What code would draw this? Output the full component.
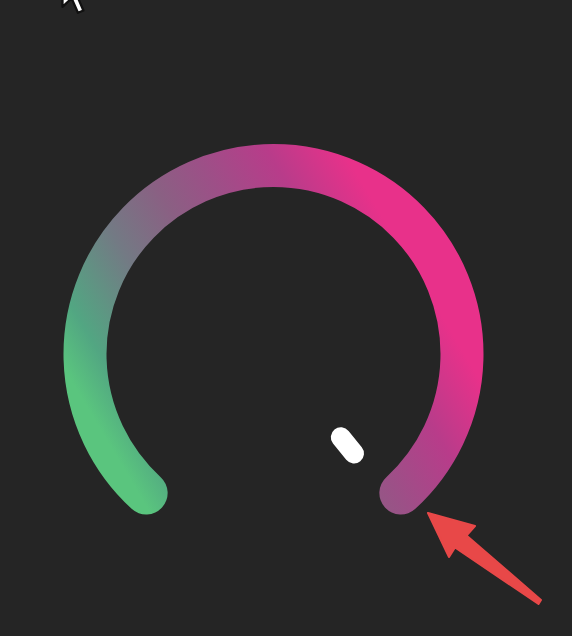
export default function App() {
  return (
    <div className="relative w-[572px] h-[636px] bg-[#252525] overflow-hidden">
      {/* mouse pointer, tip cut off by the top edge */}
      <svg
        className="absolute left-[60px] top-[-34px]"
        width="30"
        height="50"
        viewBox="-1 -1 13 22"
      >
        <path
          d="M0 0 L0 17 L4 13.2 L6.8 19.6 L9.2 18.6 L6.5 12.3 L11.6 12.3 Z"
          fill="#ffffff"
          stroke="#111111"
          strokeWidth="1"
          strokeLinejoin="round"
        />
      </svg>

      <div className="pt-[134px] pl-[54px]">
        <svg width="440" height="400" viewBox="54 134 440 400">
          <defs>
            <linearGradient
              id="gauge"
              gradientUnits="userSpaceOnUse"
              x1="140"
              y1="496"
              x2="468"
              y2="300"
            >
              <stop offset="0" stopColor="#5ac57e" />
              <stop offset="0.1" stopColor="#52a682" />
              <stop offset="0.29" stopColor="#737a84" />
              <stop offset="0.45" stopColor="#8a6083" />
              <stop offset="0.58" stopColor="#9c5087" />
              <stop offset="0.75" stopColor="#b83c8a" />
              <stop offset="0.92" stopColor="#e8318a" />
              <stop offset="1" stopColor="#e8318a" />
            </linearGradient>
          </defs>
          <path
            d="M 146.15 492.98 A 188.5 188.5 0 1 1 400.85 492.98"
            fill="none"
            stroke="url(#gauge)"
            strokeWidth="43"
            strokeLinecap="round"
          />
          <line
            x1="340.8"
            y1="437.2"
            x2="354"
            y2="453.5"
            stroke="#ffffff"
            strokeWidth="20"
            strokeLinecap="round"
          />
        </svg>
      </div>

      {/* annotation arrow */}
      <svg
        className="absolute left-[420px] top-[505px]"
        width="130"
        height="110"
        viewBox="420 505 130 110"
      >
        <path
          d="M428 513 L475 526 L466.5 535.5 L541 600 L538.5 604 L455 547.5 L449 557 Z"
          fill="#e84848"
          stroke="#e84848"
          strokeWidth="2"
          strokeLinejoin="round"
        />
      </svg>
    </div>
  );
}
